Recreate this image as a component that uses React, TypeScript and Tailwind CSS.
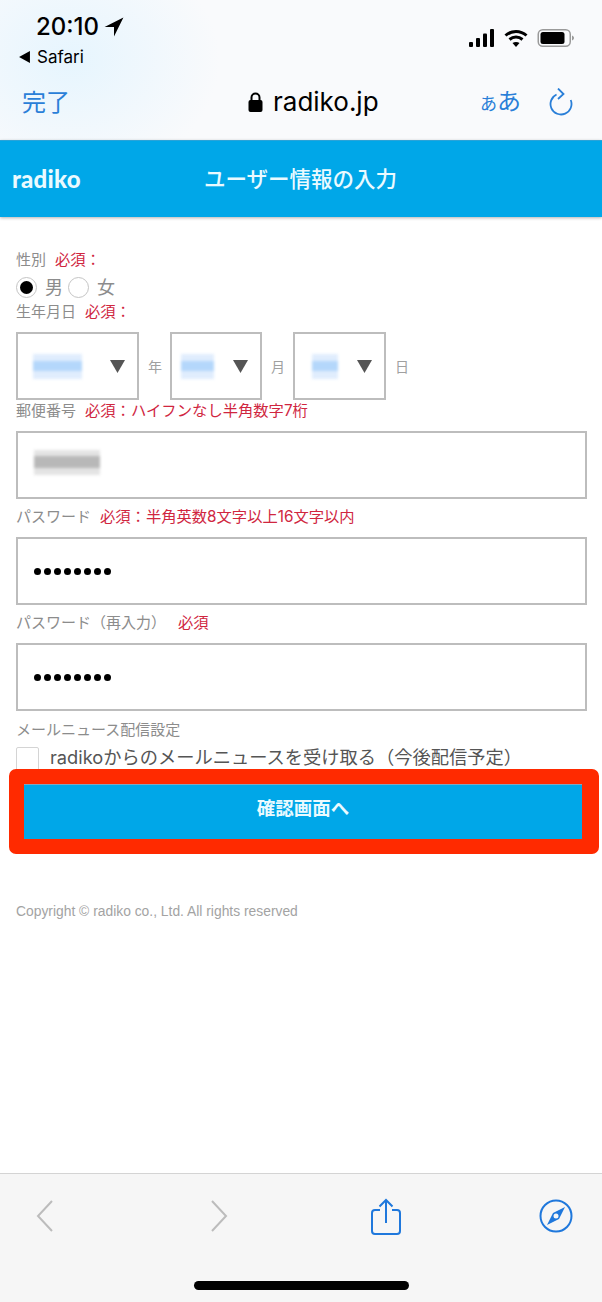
const SANS = "font-['Inter','Noto_Sans_CJK_JP',sans-serif]";

function Label({ name, note, noteGap = "ml-[9px]" }: { name: string; note: string; noteGap?: string }) {
  return (
    <p className="flex h-[20px] items-center text-[15px] leading-[20px] text-[#8c8c8c]">
      <span>{name}</span>
      <span className={`${noteGap} text-[15.300px] text-[#d0263f]`}>{note}</span>
    </p>
  );
}

// redacted values in the screenshot: a pale block with a stronger strip through it
function Blur({ w, h, outer, inner }: { w: string; h: string; outer: string; inner: string }) {
  return (
    <span className={`flex ${w} h-[25px] items-center ${outer} blur-[1.5px]`}>
      <span className={`block w-full ${h} ${inner}`} />
    </span>
  );
}

function DateSelect({ w, blurW, blurMl }: { w: string; blurW: string; blurMl: string }) {
  return (
    <div className={`${w} flex h-[68px] items-center justify-between border-2 border-[#bdbdbd] bg-white`}>
      <span className={blurMl}>
        <Blur w={blurW} h="h-[10px]" outer="bg-[#e0edfd]" inner="bg-[#b4d7fb]" />
      </span>
      <svg width="15" height="13" viewBox="0 0 15 13" className="mr-[12px]">
        <path d="M0 0h15L7.500 13z" fill="#555555" />
      </svg>
    </div>
  );
}

function TextBox({ children }: { children: React.ReactNode }) {
  return (
    <div className="flex h-[68px] w-[571px] items-center border-2 border-[#bdbdbd] bg-white px-[16px]">{children}</div>
  );
}

function Dots() {
  return (
    <div className="flex gap-[3px]">
      {[0, 1, 2, 3, 4, 5, 6, 7].map((i) => (
        <span key={i} className="h-[7px] w-[7px] rounded-full bg-black" />
      ))}
    </div>
  );
}

export default function App() {
  return (
    <div className={`${SANS} relative flex h-[1302px] w-[602px] flex-col overflow-hidden bg-white`}>
      {/* safari chrome */}
      <div className="h-[140px] shrink-0 bg-[#f9fafc] bg-[radial-gradient(ellipse_150px_120px_at_70px_60px,#e6f5fe,transparent)]">
        <div className="flex h-[81px] justify-between pl-[19px] pr-[27px]">
          <div>
            <div className="flex items-center pl-[17px] pt-[14px] text-[24px] font-medium leading-[26px] text-black">
              20:10
              <svg width="20" height="20" viewBox="0 0 17 17" className="ml-[5px]">
                <path d="M16.500 0.500 0.500 8.500h8v8z" fill="#000" />
              </svg>
            </div>
            <div className="mt-[7px] flex items-center text-[17px] leading-[20px] text-black">
              <svg width="11" height="12" viewBox="0 0 10 11" className="mr-[7px]">
                <path d="M0 5.500 10 0v11z" fill="#000" />
              </svg>
              Safari
            </div>
          </div>
          <div className="flex items-center gap-[9px] pb-[6px]">
            <svg width="26" height="20" viewBox="0 0 26 20">
              <rect x="0" y="14" width="4" height="5" rx="1" fill="#000" />
              <rect x="7" y="10" width="4" height="9" rx="1" fill="#000" />
              <rect x="14" y="5.500" width="4" height="13.500" rx="1" fill="#000" />
              <rect x="21" y="1" width="4" height="18" rx="1" fill="#000" />
            </svg>
            <svg width="24" height="20" viewBox="0 0 24 20" fill="none" stroke="#000" strokeWidth="3">
              <path d="M1.500 7.500c6-5.500 15-5.500 21 0" />
              <path d="M5.500 11.500c3.800-3.200 9.200-3.200 13 0" />
              <path d="M12 19l-3.500-4c2-1.500 5-1.500 7 0z" fill="#000" stroke="none" />
            </svg>
            <svg width="38" height="20" viewBox="0 0 37 20">
              <rect x="0.750" y="1.750" width="32" height="16.500" rx="4.500" fill="none" stroke="#9a9a9a" strokeWidth="1.500" />
              <rect x="3" y="4" width="24" height="12" rx="2.500" fill="#000" />
              <path d="M34.500 7.500c1.200.4 2 1.300 2 2.500s-.8 2.100-2 2.500z" fill="#9a9a9a" />
            </svg>
          </div>
        </div>
        <div className="relative flex h-[44px] items-center justify-between pl-[22px] pr-[29px]">
          <span className="text-[24px] leading-[30px] text-[#2a7fd8]">完了</span>
          <div className="absolute left-[248px] top-[6px] flex items-center">
            <svg width="15" height="20" viewBox="0 0 15 20" fill="none">
              <path d="M3.500 9V5.500a4 4 0 0 1 8 0V9" stroke="#000" strokeWidth="2" />
              <rect x="0.500" y="8" width="14" height="12" rx="2" fill="#000" />
            </svg>
            <span className="ml-[10px] text-[26px] leading-[30px] text-black">radiko.jp</span>
          </div>
          <div className="flex items-center">
            <span className="text-[24px] leading-[30px] text-[#2a7fd8]">
              <span className="text-[17px]">あ</span>あ
            </span>
            <svg width="24" height="30" viewBox="0 0 24 30" fill="none" stroke="#2a7fd8" strokeWidth="1.800" className="ml-[28px]">
              <path d="M12 5.500a10.500 10.500 0 1 0 10.500 11" transform="rotate(-25 12 16)" />
              <path d="M9 0.500l5.500 5.500L9 11" />
            </svg>
          </div>
        </div>
      </div>

      {/* site header */}
      <header className="flex h-[77px] shrink-0 items-center border-t border-[#2aa3d8] bg-[#00a7e8] shadow-[0_1px_3px_rgba(0,0,0,0.3)]">
        <span className="ml-[12px] w-[192px] font-['Lato',sans-serif] text-[24px] font-black leading-none tracking-[0.2px] text-[#eafaff]">
          radiko
        </span>
        <h1 className="text-[21.500px] font-medium leading-[28px] text-[#eafaff]">ユーザー情報の入力</h1>
      </header>

      {/* form */}
      <main className="flex-1 px-[16px] pt-[33px]">
        <Label name="性別" note="必須：" />
        <div className="mt-[6px] flex h-[22px] items-center text-[18px] text-[#8c8c8c]">
          <span className="flex h-[21px] w-[21px] items-center justify-center rounded-full border border-[#c4c4c4]">
            <span className="h-[13px] w-[13px] rounded-full bg-black" />
          </span>
          <span className="ml-[8px]">男</span>
          <span className="ml-[5px] h-[21px] w-[21px] rounded-full border border-[#c4c4c4]" />
          <span className="ml-[8px]">女</span>
        </div>
        <div className="mt-[4px]">
          <Label name="生年月日" note="必須：" />
        </div>
        <div className="mt-[10px] flex items-center text-[14px] text-[#a0a0a0]">
          <DateSelect w="w-[123px]" blurW="w-[49px]" blurMl="ml-[15px]" />
          <span className="ml-[9px] mr-[8px]">年</span>
          <DateSelect w="w-[92px]" blurW="w-[33px]" blurMl="ml-[9px]" />
          <span className="ml-[9px] mr-[8px]">月</span>
          <DateSelect w="w-[93px]" blurW="w-[26px]" blurMl="ml-[17px]" />
          <span className="ml-[9px]">日</span>
        </div>
        <div className="mt-[1px]">
          <Label name="郵便番号" note="必須：ハイフンなし半角数字7桁" />
        </div>
        <div className="mt-[10px]">
          <TextBox>
            <span className="mb-[6px]">
              <Blur w="w-[66px]" h="h-[12px]" outer="bg-[#e4e4e4]" inner="bg-[#b8b8b8]" />
            </span>
          </TextBox>
        </div>
        <div className="mt-[8px]">
          <Label name="パスワード" note="必須：半角英数8文字以上16文字以内" />
        </div>
        <div className="mt-[10px]">
          <TextBox>
            <Dots />
          </TextBox>
        </div>
        <div className="mt-[8px]">
          <Label name="パスワード（再入力）" note="必須" noteGap="ml-[12px]" />
        </div>
        <div className="mt-[10px]">
          <TextBox>
            <Dots />
          </TextBox>
        </div>
        <div className="mt-[9px]">
          <Label name="メールニュース配信設定" note="" />
        </div>
        <div className="mt-[7px] flex h-[23px] items-start">
          <span className="h-[24px] w-[23px] shrink-0 rounded-[2px] border border-[#d4d4d4]" />
          <span className="ml-[11px] text-[18.250px] leading-[20px] text-[#555555]">
            radikoからのメールニュースを受け取る（今後配信予定）
          </span>
        </div>
        <button className="ml-[8px] mt-[13px] flex h-[56px] w-[560px] items-center justify-center border-t-2 border-[#7fa6c0] bg-[#00a7e8] pb-[6px] pr-[2px] text-[18.500px] font-bold text-[#eafaff]">
          確認画面へ
        </button>
        <p className="mt-[64px] font-['Liberation_Sans',sans-serif] text-[13.850px] leading-[16px] text-[#a3a3a3]">
          Copyright © radiko co., Ltd. All rights reserved
        </p>
      </main>

      {/* red annotation round the button */}
      <div className="pointer-events-none absolute left-[9px] top-[769px] h-[85px] w-[590px] rounded-[7px] border-y-[15px] border-l-[15px] border-r-[17px] border-[#ff2a00]" />

      {/* safari toolbar */}
      <footer className="relative h-[129px] shrink-0 border-t border-[#d4d4d4] bg-[#f6f6f6]">
        <div className="flex h-[84px] items-center pl-[36px]">
          <svg width="18" height="32" viewBox="0 0 18 32" fill="none" stroke="#bcbcbc" strokeWidth="2">
            <path d="M16 1 2 16l14 15" />
          </svg>
          <svg width="18" height="32" viewBox="0 0 18 32" fill="none" stroke="#bcbcbc" strokeWidth="2" className="ml-[156px]">
            <path d="M2 1l14 15L2 31" />
          </svg>
          <svg width="30" height="37" viewBox="0 0 30 37" fill="none" stroke="#1f78dc" strokeWidth="2" className="ml-[143px]">
            <path d="M9 12H4a3 3 0 0 0-3 3v18a3 3 0 0 0 3 3h22a3 3 0 0 0 3-3V15a3 3 0 0 0-3-3h-5" />
            <path d="M15 25V2M8.500 8.500 15 2l6.500 6.500" />
          </svg>
          <svg width="34" height="34" viewBox="0 0 34 34" fill="none" className="ml-[138px]">
            <circle cx="17" cy="17" r="15.500" stroke="#1f78dc" strokeWidth="2" />
            <path d="M26 8 14 14 8 26l12-6z" fill="#1f78dc" />
            <circle cx="17" cy="17" r="2.500" fill="#f6f6f6" />
          </svg>
        </div>
        <div className="absolute bottom-[12px] left-[194px] h-[9px] w-[215px] rounded-full bg-black" />
      </footer>
    </div>
  );
}
